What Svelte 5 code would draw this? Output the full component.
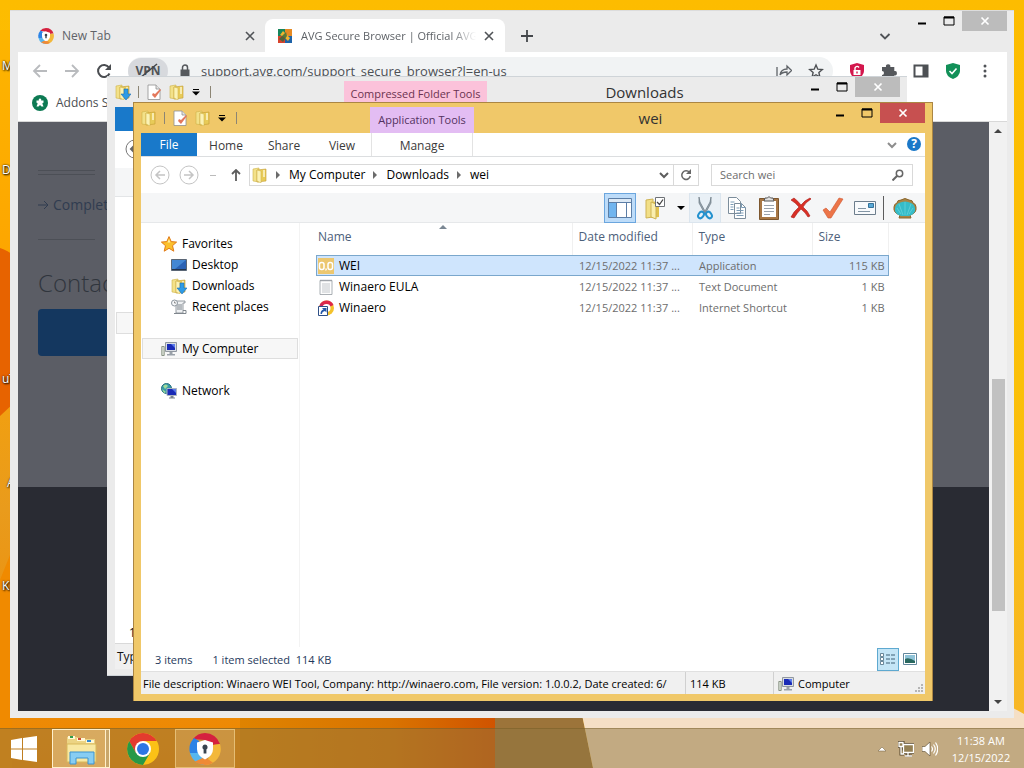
<script lang="ts">
	type Tone = 'grey' | 'red';

	const desktopLabels = [
		{ text: 'My Computer', top: 58 },
		{ text: 'Downloads', top: 162 },
		{ text: 'uTorrent', top: 371 },
		{ text: 'Avast', top: 475, inset: true },
		{ text: 'KMPlayer', top: 578 }
	];

	const favorites = [
		{ name: 'Desktop', icon: 'desktop' },
		{ name: 'Downloads', icon: 'download' },
		{ name: 'Recent places', icon: 'recent' }
	];

	const files = [
		{ name: 'WEI', icon: 'wei', type: 'Application', size: '115 KB' },
		{ name: 'Winaero EULA', icon: 'text', type: 'Text Document', size: '1 KB' },
		{ name: 'Winaero', icon: 'link', type: 'Internet Shortcut', size: '1 KB' }
	];

	const crumbs = ['My Computer', 'Downloads', 'wei'];

	let selected = $state('WEI');
	let search = $state('');
	let address = $state('support.avg.com/support_secure_browser?l=en-us');
</script>

{#snippet folderShapes()}
	<path d="M1 2l6-1v14l-6-1z" fill="#f3e189" stroke="#cfb148" stroke-width=".6" />
	<path d="M5 3l9-1v12l-9 1z" fill="#e8cb58" stroke="#c39c33" stroke-width=".6" />
	<path d="M5 3l4 1v12l-4-2z" fill="#fbf2b5" stroke="#d3b74f" stroke-width=".6" />
	<path d="M11 3h2v7h-2z" fill="#fff8d6" opacity=".7" />
{/snippet}

{#snippet icon(name: string)}
	<svg class="icon" viewBox="0 0 16 16" aria-hidden="true">
		{#if name === 'folder'}
			{@render folderShapes()}
		{:else if name === 'download'}
			{@render folderShapes()}
			<path d="M9 5h4v5h3l-5 6-5-6h3z" fill="#2e9be6" stroke="#1c6fb4" stroke-width=".6" />
		{:else if name === 'page'}
			<path d="M2 1h8l4 4v10.500H2z" fill="#fff" stroke="#8f8f8f" stroke-width=".8" />
			<path d="M10 1v4h4" fill="#e4e4e4" stroke="#8f8f8f" stroke-width=".8" />
			<path d="M6 11l3 3 6-8-1-1-5 5-2-1z" fill="#e3785c" />
		{:else if name === 'star'}
			<path d="M8 .6l2.200 5 5.400.5-4.100 3.600 1.300 5.500L8 12.300l-4.800 2.900 1.300-5.500L.4 6.100l5.400-.5z" fill="#fbc02d" stroke="#e07a18" />
			<path d="M8 3l1.300 3.500H6.500z" fill="#fff0a8" />
		{:else if name === 'desktop'}
			<path d="M.5 2.500h15v11H.5z" fill="#2a62b5" stroke="#5a6675" />
			<path d="M1 3h14L4 12H1z" fill="#4f97e0" opacity=".7" />
			<path d="M1 12h14v1H1z" fill="#22344c" />
		{:else if name === 'recent'}
			<path d="M4 2h10v2h-2v10H5V6H3z" fill="#eef0f2" stroke="#7f868d" stroke-width=".8" />
			<path d="M6 6h5M6 8h5M6 10h5M3 14.500h12v-3h-3" fill="none" stroke="#7f868d" />
			<circle cx="3.500" cy="4" r="3" fill="#f6f7f9" stroke="#8c959d" />
			<path d="M3.500 2.500V4h1.500" stroke="#666" fill="none" stroke-width=".7" />
		{:else if name === 'computer'}
			<path d="M.8 5.500h2.400v9H.8z" fill="#dfe5da" stroke="#74806f" stroke-width=".8" />
			<path d="M4.500 1.500h11v9h-11z" fill="#d9dde2" stroke="#9097a0" />
			<path d="M6 3h8v6H6z" fill="#1a2bb6" />
			<path d="M10 3h4v4z" fill="#5b7bea" />
			<path d="M8.500 11h3v2h2.500v1.500H6V13h2.500z" fill="#9aa1a9" />
		{:else if name === 'network'}
			<circle cx="5.500" cy="5.500" r="5" fill="#3a9aa8" stroke="#27707f" />
			<path d="M2 3q3-3 5 0L4 6zM1 6l4 3-2 1z" fill="#9fdc9b" />
			<path d="M6 5.500h9.500v7H6z" fill="#1a2bb6" stroke="#aeb6c0" />
			<path d="M11 6h4v4z" fill="#5b7bea" />
			<path d="M9.500 13h3v1.500H14v1H8v-1h1.500z" fill="#7c858e" />
		{:else if name === 'wei'}
			<path d="M0 0h16v16H0z" fill="#ecc76f" />
			<rect x="1.500" y="4.500" width="4.500" height="7" rx="2" fill="none" stroke="#fff" stroke-width="1.500" />
			<rect x="10" y="4.500" width="4.500" height="7" rx="2" fill="none" stroke="#fff" stroke-width="1.500" />
			<path d="M7.300 10.500h1.500v1.500L7.500 13z" fill="#fff" />
		{:else if name === 'text'}
			<path d="M2 1.500h12v14H2z" fill="#fdfdfd" stroke="#969ca2" stroke-width=".8" />
			<path d="M4 5h8M4 7h8M4 9h8M4 11h8M4 13h8" stroke="#aab0b6" stroke-width=".7" />
			<path d="M3 .5v2M5 .5v2M7 .5v2M9 .5v2M11 .5v2M13 .5v2" stroke="#8a9095" stroke-width=".7" />
		{:else if name === 'link'}
			<circle cx="8.500" cy="8" r="7.500" fill="#f4c22b" />
			<path d="M2 4.500A7.500 7.500 0 0 1 15.500 5L9 8z" fill="#dd2748" />
			<path d="M1 8a7.500 7.500 0 0 1 2-5l5 5z" fill="#c5285f" />
			<circle cx="8.500" cy="8" r="4" fill="#fff" />
			<path d="M.5 6.500h9v9h-9z" fill="#fff" stroke="#2f4f86" />
			<path d="M2.500 14q0-4 3-4.500L4 8h4.500v4.500L7 11q-3 .5-3 3z" fill="#2457a8" />
		{:else if name === 'secure'}
			<path d="M8 0a8 8 0 0 1 7.500 5.500L11 6 8 3.500 2 3A8 8 0 0 1 8 0z" fill="#d5213f" />
			<path d="M15.500 5.500A8 8 0 0 1 8 16l2-4 2-6z" fill="#f3b83a" />
			<path d="M8 16A8 8 0 0 1 .5 10L4 6l3 7z" fill="#56b6ee" />
			<path d="M8 16a8 8 0 0 1-5-1.800L8 12l4 2.900A8 8 0 0 1 8 16z" fill="#ef8a35" />
			<path d="M.5 10A8 8 0 0 1 2.500 2.500L5 4v6z" fill="#2c83e6" />
			<path d="M8 3.500l4 1.300v3.200q0 3.500-4 5.200-4-1.700-4-5.200V4.800z" fill="#fff" />
			<path d="M8 5.800a1.300 1.300 0 0 1 .7 2.400v2H7.300v-2A1.300 1.300 0 0 1 8 5.800z" fill="#38434f" />
		{:else if name === 'avg'}
			<path d="M1 1h7v7H1z" fill="#17855c" />
			<path d="M8 1h7v7H8z" fill="#e58a24" />
			<path d="M1 8h7v7H1z" fill="#d8432c" />
			<path d="M8 8h7v7H8z" fill="#1e63a8" />
			<path d="M6 3l4 4 3 3-2 3-4-4-4-2z" fill="#f1b52e" />
			<path d="M2 11l7-7 1 4-4 6z" fill="#356a3c" opacity=".8" />
		{/if}
	</svg>
{/snippet}

{#snippet titleBar(first: string, context: string, title: string, tone: Tone)}
	<header class="titlebar {tone}">
		<div class="quick">
			{@render icon(first)}
			<i class="sep"></i>
			{@render icon('page')}
			{@render icon('folder')}
			<svg class="caret" viewBox="0 0 8 8"><path d="M1 1.500h6" stroke="#000" /><path d="M0 3.500h8L4 7.500z" /></svg>
			<i class="sep"></i>
		</div>
		<span class="context">{context}</span>
		<h2>{title}</h2>
		{@render caption(tone)}
	</header>
{/snippet}

{#snippet caption(tone: Tone)}
	<div class="caption">
		<button class="min" aria-label="Minimize"><svg viewBox="0 0 12 12"><path d="M2 8.500h8" stroke="#000" stroke-width="2" /></svg></button>
		<button class="max" aria-label="Maximize"><svg viewBox="0 0 12 12"><path d="M1 2v8h10V2z" fill="none" stroke="#000" /><path d="M1 2.500h10" stroke="#000" stroke-width="2" /></svg></button>
		<button class="close {tone}" aria-label="Close"><svg viewBox="0 0 12 12"><path d="M2.500 2.500l7 7m0-7l-7 7" stroke="#fff" stroke-width="1.700" /></svg></button>
	</div>
{/snippet}

{#snippet cross()}
	<svg class="cross" viewBox="0 0 10 10"><path d="M1 1l8 8m0-8L1 9" stroke="#505357" stroke-width="1.600" /></svg>
{/snippet}

<div class="desktop">
	<svg class="wallpaper" viewBox="0 0 1024 768" preserveAspectRatio="none" aria-hidden="true">
		<defs>
			<linearGradient id="sky" x2="0" y2="1">
				<stop offset="0" stop-color="#fdbc00" />
				<stop offset=".5" stop-color="#fbc008" />
				<stop offset="1" stop-color="#f7b52c" />
			</linearGradient>
			<linearGradient id="left" x2="0" y2="1">
				<stop offset="0" stop-color="#fdb500" />
				<stop offset=".3" stop-color="#fda600" />
				<stop offset=".65" stop-color="#e99b1c" />
				<stop offset="1" stop-color="#ef8600" />
			</linearGradient>
			<linearGradient id="band">
				<stop offset="0" stop-color="#df8300" />
				<stop offset=".55" stop-color="#d97400" />
				<stop offset="1" stop-color="#cf4f00" />
			</linearGradient>
		</defs>
		<path d="M0 0h1024v768H0z" fill="url(#sky)" />
		<path d="M0 30h300v738H0z" fill="url(#left)" />
		<path d="M0 248q12 4 30 20v120L0 416z" fill="#e76300" />
		<path d="M0 580l12-30v218H0z" fill="#f08a00" />
		<path d="M240 718l50-30h220v80H240z" fill="url(#band)" />
		<path d="M495 700h84l14 68h-98z" fill="#9c743a" />
		<path d="M579 700h420l25 14v54H593z" fill="#f5dfc5" />
	</svg>

	<main>
		{#each desktopLabels as label (label.text)}
			<span class="shortcut" class:inset={label.inset} style:top="{label.top}px">{label.text}</span>
		{/each}

		<section class="window browser" aria-label="Browser">
			<header class="strip">
				<div class="tab">
					{@render icon('secure')}
					<span class="tab-title">New Tab</span>
					<button aria-label="Close tab">{@render cross()}</button>
				</div>
				<div class="tab active">
					{@render icon('avg')}
					<span class="tab-title">AVG Secure Browser | Official AVG</span>
					<button aria-label="Close tab">{@render cross()}</button>
				</div>
				<button class="new-tab" aria-label="New tab"><svg viewBox="0 0 12 12"><path d="M6 0v12M0 6h12" stroke="#44474b" stroke-width="1.800" /></svg></button>
				<button class="tab-menu" aria-label="Search tabs"><svg viewBox="0 0 12 12"><path d="M1.500 4L6 8.500 10.500 4" fill="none" stroke="#505357" stroke-width="1.800" /></svg></button>
				{@render caption('grey')}
			</header>

			<div class="toolbar">
				<button aria-label="Back"><svg viewBox="0 0 16 16"><path d="M15 8H2m6-6L2 8l6 6" fill="none" stroke="#b9bbbe" stroke-width="1.800" /></svg></button>
				<button aria-label="Forward"><svg viewBox="0 0 16 16"><path d="M1 8h13M8 2l6 6-6 6" fill="none" stroke="#b9bbbe" stroke-width="1.800" /></svg></button>
				<button aria-label="Reload"><svg viewBox="0 0 16 16"><path d="M13.500 10.500A6 6 0 1 1 13 4.500" fill="none" stroke="#4a4d51" stroke-width="2" /><path d="M15 1v6H9z" fill="#4a4d51" /></svg></button>
				<div class="omnibox">
					<button class="vpn">VPN<svg viewBox="0 0 24 16"><path d="M4 15L21 1" stroke="#44474b" stroke-width="1.500" /></svg></button>
					<svg class="lock" viewBox="0 0 12 14"><path d="M1.500 5.500h9V13h-9z" fill="#55585c" /><path d="M3.500 6V3.500a2.500 2.500 0 0 1 5 0V6" fill="none" stroke="#55585c" stroke-width="1.500" /></svg>
					<input type="text" aria-label="Address" bind:value={address} />
					<button aria-label="Share page"><svg viewBox="0 0 16 16"><path d="M1 4v11M4 12q1-6 7-6V3l4.500 4.500L11 12V9q-5 0-7 3z" fill="none" stroke="#5f6368" stroke-width="1.300" /></svg></button>
					<button aria-label="Bookmark"><svg viewBox="0 0 16 16"><path d="M8 2l1.800 4.200 4.500.4-3.400 3 1 4.400L8 11.700 4.100 14l1-4.400-3.400-3 4.500-.4z" fill="none" stroke="#4d5054" stroke-width="1.400" /></svg></button>
				</div>
				<div class="extensions">
					<button aria-label="Privacy"><svg viewBox="0 0 16 16"><path d="M8 0l7 2v6q0 5-7 8-7-3-7-8V2z" fill="#d3174d" /><path d="M4.500 7h7v5h-7z" fill="#fff" /><path d="M6 7V5q2-3 4-.5" fill="none" stroke="#fff" stroke-width="1.400" /><path d="M7.300 8.500h1.400v2H7.300z" fill="#d3174d" /></svg></button>
					<button aria-label="Extensions"><svg viewBox="0 0 16 16"><path d="M1 4h4a2.200 2.200 0 1 1 4.300 0h4v4a2.200 2.200 0 1 1 0 4.300V16H9a2 2 0 1 0-4 0H1v-4a2 2 0 1 0 0-4z" fill="#55585c" /></svg></button>
					<button aria-label="Side panel"><svg viewBox="0 0 16 16"><path d="M1.500 2.500h13v11h-13z" fill="none" stroke="#4d5054" stroke-width="2" /><path d="M9.500 2h5v12h-5z" fill="#4d5054" /></svg></button>
					<button aria-label="Security"><svg viewBox="0 0 16 16"><path d="M8 0l7 2v6q0 5-7 8-7-3-7-8V2z" fill="#129058" /><path d="M4.500 8L7 10.500l4.500-5" fill="none" stroke="#fff" stroke-width="1.600" /></svg></button>
					<button aria-label="More"><svg viewBox="0 0 16 16"><g fill="#505357"><circle cx="8" cy="3" r="1.500" /><circle cx="8" cy="8" r="1.500" /><circle cx="8" cy="13" r="1.500" /></g></svg></button>
				</div>
			</div>

			<nav class="bookmarks">
				<svg class="icon" viewBox="0 0 16 16"><circle cx="8" cy="8" r="8" fill="#0d7a53" /><path d="M4.500 5.500h2.300q-.5-2 1.200-2t1.200 2h2.300v2.300q-1.500 0-1 1.200l1 2.500H9.500l-1.500-1.500-1.500 1.500H4.500l1-2.500q.5-1.200-1-1.200z" fill="#fff" /></svg>
				<a href="#addons">Addons Store</a>
			</nav>

			<div class="viewport">
				<article class="site">
					<div class="content">
						<hr class="double" />
						<a href="#complete"><svg viewBox="0 0 12 12"><path d="M0 6h10M6 2l4 4-4 4" fill="none" stroke="#303c50" /></svg>Complete</a>
						<hr />
						<h1>Contact</h1>
						<button aria-label="Contact support"></button>
					</div>
					<footer></footer>
				</article>
				<div class="scrollbar">
					<svg viewBox="0 0 8 8"><path d="M0 6l4-4 4 4z" fill="#444" /></svg>
					<i></i>
					<svg viewBox="0 0 8 8"><path d="M0 2l4 4 4-4z" fill="#444" /></svg>
				</div>
			</div>
		</section>

		<section class="window downloads" aria-label="Downloads">
			{@render titleBar('download', 'Compressed Folder Tools', 'Downloads', 'grey')}
			<div class="pane">
				<div class="blue"></div>
				<div class="nav-row"><svg viewBox="0 0 20 20"><circle cx="10" cy="10" r="9" fill="none" stroke="#777" /><path d="M15 10H6m4-4l-4 4 4 4" fill="none" stroke="#666" stroke-width="2" /></svg></div>
				<div class="grey-band"></div>
				<div class="tree"><i></i></div>
				<div class="count">1</div>
				<div class="status">Type</div>
			</div>
		</section>

		<section class="window wei" aria-label="wei">
			{@render titleBar('folder', 'Application Tools', 'wei', 'red')}
			<div class="pane">
				<nav class="ribbon">
					<button class="file">File</button>
					<button>Home</button>
					<button>Share</button>
					<button>View</button>
					<button class="manage">Manage</button>
					<svg class="expand" viewBox="0 0 12 12"><path d="M2 4l4 4 4-4" fill="none" stroke="#8d8d8d" stroke-width="2" /></svg>
					<button class="help" aria-label="Help">?</button>
				</nav>

				<div class="address-row">
					<button aria-label="Back"><svg viewBox="0 0 20 20"><circle cx="10" cy="10" r="9" fill="none" stroke="#c4c4c4" /><path d="M15 10H6m4-4l-4 4 4 4" fill="none" stroke="#c4c4c4" stroke-width="1.500" /></svg></button>
					<button aria-label="Forward"><svg viewBox="0 0 20 20"><circle cx="10" cy="10" r="9" fill="none" stroke="#c4c4c4" /><path d="M5 10h9m-4-4l4 4-4 4" fill="none" stroke="#c4c4c4" stroke-width="1.500" /></svg></button>
					<i class="dash"></i>
					<button class="up" aria-label="Up"><svg viewBox="0 0 12 12"><path d="M6 12V1M2 5l4-4 4 4" fill="none" stroke="#5d5d5d" stroke-width="1.800" /></svg></button>
					<div class="path">
						{@render icon('folder')}
						{#each crumbs as crumb (crumb)}
							<svg class="arrow" viewBox="0 0 6 8"><path d="M1 0l4 4-4 4z" fill="#6b6b6b" /></svg>
							<a href="#{crumb}">{crumb}</a>
						{/each}
						<svg class="drop" viewBox="0 0 12 12"><path d="M2 4l4 4 4-4" fill="none" stroke="#5d5d5d" stroke-width="2" /></svg>
						<button aria-label="Refresh"><svg viewBox="0 0 12 12"><path d="M9.500 3.500A4.300 4.300 0 1 0 10.300 7" fill="none" stroke="#666" stroke-width="1.500" /><path d="M11 0v5H6z" fill="#666" /></svg></button>
					</div>
					<label class="search">
						<input type="text" placeholder="Search wei" aria-label="Search wei" bind:value={search} />
						<svg viewBox="0 0 12 12"><circle cx="7.500" cy="4.500" r="3.200" fill="none" stroke="#666" stroke-width="1.500" /><path d="M5 7l-4.500 4.500" stroke="#666" stroke-width="2" /></svg>
					</label>
				</div>

				<div class="commands">
					<button class="on" aria-label="Navigation pane"><svg viewBox="0 0 24 24"><path d="M.5 2.500h23v19H.5z" fill="#fff" stroke="#5c7ea6" /><path d="M1 3h22v3H1z" fill="#dce9f5" /><path d="M1 6h7v15H1z" fill="#70b5ef" /><path d="M8.500 6v15M1 6.500h22M18.500 7v14" stroke="#5c7ea6" /></svg></button>
					<button class="options" aria-label="Folder options"><svg viewBox="0 0 24 24"><path d="M3 4l7-1v18l-7 1z" fill="#f2df87" stroke="#ceb354" /><path d="M8 6l8-1v16l-8 1z" fill="#e0c14e" /><path d="M8 6l5 2v15l-5-2z" fill="#faeeae" stroke="#ceb354" /><path d="M12.500 1.500h9v9h-9z" fill="#fff" stroke="#6e7277" /><path d="M14 6l2.500 2.500L20 3.500" fill="none" stroke="#444" stroke-width="1.300" /></svg></button>
					<svg class="more" viewBox="0 0 8 8"><path d="M0 2h8L4 6z" /></svg>
					<button class="hot" aria-label="Cut"><svg viewBox="0 0 24 24"><path d="M6 1l1 5 6 11-1 1L6 7zM18 1l-1 5-6 11 1 1 6-11z" fill="#9ba7b1" stroke="#6b7882" stroke-width=".7" /><ellipse cx="8" cy="19" rx="2.500" ry="3.500" transform="rotate(35 8 19)" fill="none" stroke="#2492cf" stroke-width="2" /><ellipse cx="16" cy="19" rx="2.500" ry="3.500" transform="rotate(-35 16 19)" fill="none" stroke="#2492cf" stroke-width="2" /></svg></button>
					<button aria-label="Copy"><svg viewBox="0 0 24 24"><path d="M3.500 1.500h8l4 4v12h-12zM9.500 7.500h7l4 4v11h-11z" fill="#fff" stroke="#7c8d9b" /><path d="M16.500 7.500v4h4M5.500 6h4M5.500 8.500h3M5.500 11h3M5.500 13.500h3M11.500 12h3M11.500 14.500h7M11.500 17h7M11.500 19.500h7" fill="none" stroke="#7c9cb6" /></svg></button>
					<button aria-label="Paste"><svg viewBox="0 0 24 24"><path d="M2.500 2.500h19v21h-19z" fill="#a87745" stroke="#7d572f" /><path d="M5 5h14v16H5z" fill="#fff" /><path d="M7 9.500h10M7 12.500h10M7 15.500h10M7 18.500h6" stroke="#9aa3ad" /><path d="M7 5l1-3h2.500q1.500-3 3 0H16l1 3z" fill="#e0e0e0" stroke="#555" /></svg></button>
					<button aria-label="Delete"><svg viewBox="0 0 24 24"><path d="M2 4l3-2q4 3 7 7 4-5 9-7l1 1q-5 3-8 8 5 4 7 9l-2 1q-3-5-7-8-4 4-7 9l-3-1q3-6 8-10-3-4-8-7z" fill="#d92f25" stroke="#a81d18" stroke-width=".6" /></svg></button>
					<button aria-label="Rename"><svg viewBox="0 0 24 24"><path d="M2 14l3-2 4 4 9-14 4 1L10 22H7z" fill="#ec7548" stroke="#cf5630" stroke-width=".6" /></svg></button>
					<button aria-label="Properties"><svg viewBox="0 0 24 24"><path d="M1.500 5.500h21v13h-21z" fill="#f8fafc" stroke="#6c7d8c" /><path d="M15.500 7.500h5v4h-5z" fill="#58a8d6" stroke="#35739a" /><path d="M5 12.500h8M5 15.500h12" stroke="#8396a5" /></svg></button>
					<i class="divider"></i>
					<button aria-label="Classic Shell"><svg viewBox="0 0 24 24"><path d="M7 19Q0 17 1 11q0-3 3-4 0-3 4-3 4-3 8 0 4 0 4 3 3 1 3 4 1 6-6 8l1 3H6z" fill="#a88545" stroke="#8c672e" /><path d="M8 20Q1 18 2 12q1-4 4-5 6-3 12 0 3 1 4 5 1 6-6 8z" fill="#35bcc8" /><path d="M12 19V6M10 19L6 8M14 19l4-11M8 18l-4-6M16 18l4-6" stroke="#6bd6dc" stroke-width=".7" /></svg></button>
				</div>

				<div class="body">
					<nav class="tree">
						<a href="#favorites">{@render icon('star')}Favorites</a>
						{#each favorites as item (item.name)}
							<a class="sub" href="#{item.icon}">{@render icon(item.icon)}{item.name}</a>
						{/each}
						<a class="place current" href="#computer">{@render icon('computer')}My Computer</a>
						<a class="place" href="#network">{@render icon('network')}Network</a>
					</nav>
					<div class="list">
						<table>
							<thead>
								<tr>
									<th class="name">Name<svg viewBox="0 0 8 4"><path d="M0 4l4-4 4 4z" fill="#7b8793" /></svg></th>
									<th class="date">Date modified</th>
									<th class="type">Type</th>
									<th class="size">Size</th>
								</tr>
							</thead>
							<tbody>
								{#each files as file (file.name)}
									<tr class:selected={selected === file.name} onclick={() => (selected = file.name)}>
										<td><span class="file-name">{@render icon(file.icon)}{file.name}</span></td>
										<td>12/15/2022 11:37 ...</td>
										<td>{file.type}</td>
										<td class="num">{file.size}</td>
									</tr>
								{/each}
							</tbody>
						</table>
					</div>
				</div>

				<div class="summary">
					<span>3 items</span>
					<span>1 item selected&nbsp; 114 KB</span>
					<button class="view on" aria-label="Details view"><svg viewBox="0 0 18 16"><path d="M1.500 2.500h3v3h-3zM1.500 6.500h3v3h-3zM1.500 10.500h3v3h-3z" fill="#fff" stroke="#4c6c82" stroke-width=".8" /><path d="M7 4h4m1 0h4M7 8h4m1 0h4M7 12h4m1 0h4" stroke="#3f6077" /></svg></button>
					<button class="view" aria-label="Large icons view"><svg viewBox="0 0 18 16"><path d="M2.500 2.500h13v11h-13z" fill="#fff" stroke="#62879c" /><path d="M4 4h10v8H4z" fill="#8fc3d8" /><path d="M4 8q4-2 10 2v2H4z" fill="#29685f" /></svg></button>
				</div>

				<footer class="status">
					<span>File description: Winaero WEI Tool, Company: http://winaero.com, File version: 1.0.0.2, Date created: 6/</span>
					<span>114 KB</span>
					<span>{@render icon('computer')}Computer</span>
					<svg class="grip" viewBox="0 0 10 10"><path d="M7 1h2v2H7zM7 4h2v2H7zM4 4h2v2H4zM7 7h2v2H7zM4 7h2v2H4zM1 7h2v2H1z" fill="#b5b5b5" /></svg>
				</footer>
			</div>
		</section>
	</main>

	<footer class="taskbar">
		<button class="start" aria-label="Start"><svg viewBox="0 0 28 28"><path d="M1 5l11-2v10.500H1zM13 3l14-2v12.500H13zM1 14.500h11V25L1 23zM13 14.500h14V27l-14-2z" fill="#fff" /></svg></button>
		<button class="task explorer" aria-label="File Explorer">
			<svg viewBox="0 0 32 32"><path d="M2 4h10l2 2h16v23H2z" fill="#ecd483" /><path d="M3 3h7v3H3zM12 5h8v3h-8zM21 7h8v3h-8z" fill="#fff8d5" /><path d="M5 3h3v2H5z" fill="#2f9d4b" /><path d="M13 5h3v2h-3z" fill="#cf4934" /><path d="M22 7h4v2h-4z" fill="#3589cc" /><path d="M2 11h29v18H2z" fill="#f8e8a2" stroke="#d8b95a" /><path d="M5 19h24v12h-6v-6H11v6H5z" fill="#87cdf3" stroke="#3c93cf" /></svg>
		</button>
		<button class="task" aria-label="Chrome">
			<svg viewBox="0 0 32 32"><circle cx="16" cy="16" r="16" fill="#fbc116" /><path d="M2.200 8A16 16 0 0 1 29.800 8H16L9 20z" fill="#e33b2e" /><path d="M2.200 8A16 16 0 0 0 16 32l7-12-14 0z" fill="#289847" /><circle cx="16" cy="16" r="8" fill="#fff" /><circle cx="16" cy="16" r="6" fill="#2d76e4" /></svg>
		</button>
		<button class="task running" aria-label="AVG Secure Browser">{@render icon('secure')}</button>
		<div class="tray">
			<svg viewBox="0 0 16 16"><path d="M4 10l4-4 4 4z" fill="#fff" stroke="#6d5b38" stroke-width=".5" /></svg>
			<svg viewBox="0 0 16 16"><path d="M5.500 3.500h10v8h-10zM10 12v3M7 15h7M1 1.500h4v4H1zM3 6v7h3" fill="none" stroke="#54452a" stroke-width="3" /><path d="M5.500 3.500h10v8h-10zM10 12v3M7 15h7M1 1.500h4v4H1zM3 6v7h3" fill="#948054" stroke="#fff" stroke-width="1.300" /></svg>
			<svg viewBox="0 0 16 16"><path d="M0 5.500h3L8 1v14l-5-4.500H0z" fill="#fff" stroke="#54452a" stroke-width=".6" /><path d="M9.500 5.500q2 2.500 0 5M11.500 3.500q3.500 4.500 0 9M13.500 1.500q4.500 6.500 0 13" fill="none" stroke="#fff" stroke-width="1.200" /></svg>
			<time>11:38 AM<br />12/15/2022</time>
		</div>
	</footer>
</div>

<style>
	:global(body) {
		margin: 0;
	}
	.desktop {
		position: relative;
		display: flex;
		flex-direction: column;
		height: 100vh;
		overflow: hidden;
		font-family: 'Open Sans', 'Noto Sans', sans-serif;
		font-size: 12px;
		line-height: 16px;
		color: #111;
	}
	.desktop * {
		box-sizing: border-box;
	}
	.wallpaper {
		position: absolute;
		inset: 0;
		width: 100%;
		height: 100%;
	}
	main {
		position: relative;
		flex: 1;
	}
	button,
	input {
		font: inherit;
		color: inherit;
		border: 0;
		padding: 0;
		margin: 0;
		background: none;
	}
	button {
		display: flex;
		align-items: center;
		justify-content: center;
	}
	a {
		color: inherit;
		text-decoration: none;
	}
	svg {
		display: block;
		flex: none;
	}
	.icon {
		width: 16px;
		height: 16px;
	}
	.shortcut {
		position: absolute;
		left: 2px;
		color: #fff;
		text-shadow: 1px 1px 2px #000, 0 0 2px #000;
		white-space: nowrap;
	}
	.shortcut.inset {
		left: 7px;
	}
	.window {
		position: absolute;
		display: flex;
		flex-direction: column;
		overflow: hidden;
	}
	.window.browser {
		inset: 10px 10px 10px 10px;
		padding: 0 7px 7px 8px;
		background: #ebebeb;
		border-top: 1px solid #dcdcdc;
	}
	.window.downloads {
		inset: 76px 117px 52px 107px;
		padding: 0 7px 6px 8px;
		background: #ebebeb;
		border: solid #cfd4d8;
		border-width: 1px 0;
	}
	.window.wei {
		inset: 102px 91px 27px 133px;
		padding: 0 7px 7px;
		background: #f0c869;
		border: 1px solid #ab8643;
		border-bottom-width: 0;
	}

	/* caption buttons */
	.caption {
		display: flex;
		align-self: flex-start;
	}
	.caption button {
		height: 20px;
	}
	.caption svg {
		width: 12px;
		height: 12px;
	}
	.min {
		width: 26px;
	}
	.max {
		width: 27px;
	}
	.caption .close {
		width: 45px;
		background: #bcbcbc;
	}
	.caption .close.red {
		background: #c75050;
	}

	.titlebar {
		display: grid;
		grid-template-columns: 229px auto 1fr 98px;
		flex: none;
		height: 30px;
		align-items: center;
	}
	.quick {
		display: flex;
		align-items: center;
		gap: 7px;
	}
	.sep {
		width: 1px;
		height: 12px;
		background: #8c8574;
	}
	.quick .caret {
		width: 8px;
		height: 8px;
		margin-right: 3px;
	}
	.context {
		align-self: end;
		width: 104px;
		height: 26px;
		font-size: 11px;
		line-height: 26px;
		text-align: center;
		white-space: nowrap;
		color: #53325f;
		background: #e3bdf3;
	}
	.grey .context {
		width: 143px;
		color: #6b3350;
		background: #fbc2da;
	}
	.titlebar h2 {
		margin: 0;
		font-size: 15px;
		font-weight: 400;
		text-align: center;
		color: #333;
	}

	/* browser */
	.strip {
		display: flex;
		flex: none;
		height: 41px;
		align-items: flex-end;
	}
	.tab {
		display: flex;
		flex: 0 1 240px;
		min-width: 0;
		height: 33px;
		align-items: center;
		padding: 0 11px 0 12px;
		color: #5f6368;
	}
	.tab:first-child {
		flex-basis: 247px;
		padding: 0 10px 0 20px;
	}
	.tab.active {
		background: #fff;
		border-radius: 8px 8px 0 0;
	}
	.tab-title {
		flex: 1;
		margin: 0 8px;
		overflow: hidden;
		white-space: nowrap;
	}
	.active .tab-title {
		font-size: 11px;
		mask-image: linear-gradient(90deg, #000 85%, transparent);
	}
	.cross {
		width: 10px;
		height: 10px;
	}
	.new-tab {
		width: 44px;
		height: 33px;
	}
	.new-tab svg,
	.tab-menu svg {
		width: 12px;
		height: 12px;
	}
	.tab-menu {
		margin-left: auto;
		width: 48px;
		height: 33px;
	}
	.toolbar {
		display: flex;
		flex: none;
		height: 38px;
		align-items: center;
		gap: 16px;
		padding: 0 14px;
		background: #fff;
	}
	.toolbar svg {
		width: 16px;
		height: 16px;
	}
	.omnibox {
		display: flex;
		flex: 1;
		height: 28px;
		align-items: center;
		gap: 16px;
		padding-right: 9px;
		background: #f1f3f4;
		border-radius: 14px;
	}
	.omnibox .vpn {
		position: relative;
		width: 40px;
		height: 26px;
		margin-right: -5px;
		font-weight: 700;
		color: #505357;
		background: #d7d9dd;
		border-radius: 13px;
	}
	.omnibox .vpn svg {
		position: absolute;
		width: 24px;
	}
	.omnibox .lock {
		width: 12px;
		height: 14px;
		margin-right: -6px;
	}
	.omnibox input {
		flex: 1;
		min-width: 0;
		font-size: 13px;
		color: #4d5054;
	}
	.extensions {
		display: flex;
		gap: 16px;
	}
	.bookmarks {
		display: flex;
		flex: none;
		height: 32px;
		align-items: center;
		gap: 8px;
		padding: 0 14px 6px;
		color: #4b4e52;
		background: #fff;
		border-bottom: 1px solid #d8d8d8;
	}
	.viewport {
		display: flex;
		flex: 1;
		min-height: 0;
	}
	.site {
		display: flex;
		flex: 1;
		flex-direction: column;
		background: #5b5d65;
	}
	.content {
		height: 62%;
		padding: 48px 20px 0;
		color: #30353d;
	}
	.content hr {
		width: 57px;
		margin: 0;
		border: 0;
		border-top: 1px solid #4c4f56;
	}
	.content .double {
		height: 5px;
		border-bottom: 1px solid #4c4f56;
	}
	.content a {
		display: flex;
		align-items: center;
		gap: 3px;
		padding: 22px 0 26px;
		font-size: 14px;
		color: #303c50;
	}
	.content a svg {
		width: 12px;
		height: 12px;
	}
	.content h1 {
		margin: 26px 0 10px;
		font-size: 24px;
		line-height: 33px;
		font-weight: 300;
	}
	.content button {
		width: 240px;
		height: 47px;
		background: #14375f;
		border-radius: 4px;
	}
	.site footer {
		flex: 1;
		background: #292b33;
	}
	.scrollbar {
		display: flex;
		width: 18px;
		flex-direction: column;
		align-items: center;
		padding: 5px 0;
		background: #f1f1f1;
	}
	.scrollbar svg {
		width: 8px;
		height: 8px;
	}
	.scrollbar i {
		width: 13px;
		height: 40%;
		margin: auto 0 87px;
		background: #c1c1c1;
	}

	/* explorer windows */
	.pane {
		display: flex;
		flex: 1;
		flex-direction: column;
		min-height: 0;
		background: #fff;
	}
	.blue {
		width: 56px;
		height: 24px;
		background: #1979ca;
	}
	.nav-row {
		height: 37px;
		padding: 8px 10px;
	}
	.nav-row svg {
		width: 20px;
		height: 20px;
	}
	.grey-band {
		height: 29px;
		background: #f5f6f7;
		border-bottom: 1px solid #e3e5e7;
	}
	.downloads .tree {
		flex: 1;
		width: 158px;
		padding: 115px 0 0 1px;
	}
	.downloads .tree i {
		display: block;
		height: 22px;
		background: #f7f7f7;
		border: 1px solid #dedede;
	}
	.count {
		height: 20px;
		padding: 2px 14px 0;
	}
	.downloads .status {
		height: 26px;
		padding: 5px 2px;
		background: #f0f0f0;
		border-top: 1px solid #d9d9d9;
	}
	.ribbon {
		display: flex;
		flex: none;
		height: 24px;
		align-items: stretch;
		border-bottom: 1px solid #dcdee0;
		color: #3b3b3b;
	}
	.ribbon button {
		width: 58px;
		padding-top: 2px;
	}
	.ribbon .file {
		width: 56px;
		padding-top: 0;
		color: #fff;
		background: #1979ca;
	}
	.ribbon .manage {
		width: 102px;
		border: solid #e3e3e3;
		border-width: 0 1px;
	}
	.expand {
		width: 12px;
		height: 12px;
		align-self: center;
		margin-left: auto;
	}
	.ribbon .help {
		width: 14px;
		height: 14px;
		margin: 4px 4px 0 9px;
		padding-top: 0;
		font-weight: 700;
		color: #fff;
		background: #1b78c8;
		border-radius: 50%;
	}
	.address-row {
		display: flex;
		flex: none;
		height: 36px;
		align-items: center;
		padding: 0 12px 0 9px;
	}
	.address-row svg {
		width: 12px;
		height: 12px;
	}
	.address-row > button svg {
		width: 20px;
		height: 20px;
	}
	.address-row > button + button {
		margin-left: 9px;
	}
	.dash {
		width: 6px;
		height: 1px;
		margin-left: 11px;
		background: #bbb;
	}
	.address-row .up {
		margin: 0 7px 0 14px;
	}
	.address-row .up svg {
		width: 12px;
		height: 12px;
	}
	.path {
		display: flex;
		flex: 1;
		height: 22px;
		align-items: center;
		padding-left: 2px;
		color: #000;
		border: 1px solid #d9d9d9;
	}
	.path .icon {
		width: 16px;
		height: 16px;
	}
	.path .arrow {
		width: 6px;
		height: 8px;
		margin: 0 8px 0 7px;
	}
	.path .drop {
		margin-left: auto;
		margin-right: 3px;
	}
	.path button {
		width: 25px;
		height: 100%;
		border-left: 1px solid #d9d9d9;
	}
	.search {
		display: flex;
		width: 202px;
		height: 22px;
		align-items: center;
		margin-left: 12px;
		padding: 0 8px;
		border: 1px solid #d9d9d9;
	}
	.search input {
		flex: 1;
		min-width: 0;
		font-size: 11px;
		outline: 0;
	}
	.search input::placeholder {
		color: #6d6d6d;
		opacity: 1;
	}
	.commands {
		display: flex;
		flex: none;
		height: 30px;
		align-items: center;
		justify-content: flex-end;
		padding-right: 4px;
		background: #f5f6f7;
		border-bottom: 1px solid #e6e8ea;
	}
	.commands button {
		width: 32px;
		height: 30px;
	}
	.commands button svg {
		width: 24px;
		height: 24px;
	}
	.commands .on {
		margin-right: 3px;
		background: #bddcf9;
		border: 1px solid #6ba6de;
	}
	.commands .hot {
		background: #e9f0f6;
		border: 1px solid #dbe5ee;
	}
	.commands .more {
		width: 8px;
		height: 8px;
		margin: 0 4px 0 6px;
	}
	.divider {
		width: 1px;
		height: 24px;
		margin: 0 5px 0 2px;
		background: #5c5c5c;
	}
	.body {
		display: flex;
		flex: 1;
		min-height: 0;
	}
	.wei .tree {
		display: flex;
		width: 159px;
		flex-direction: column;
		padding: 10px 1px 0;
		color: #000;
		border-right: 1px solid #f3f3f3;
	}
	.tree a {
		display: flex;
		height: 21px;
		align-items: center;
		gap: 5px;
		padding-left: 18px;
		border: 1px solid transparent;
	}
	.tree .sub {
		padding-left: 28px;
	}
	.tree .place {
		margin-top: 21px;
	}
	.tree .current {
		background: #f7f7f7;
		border-color: #dedede;
	}
	.list {
		flex: 1;
		padding-left: 16px;
		overflow: hidden;
	}
	table {
		table-layout: fixed;
		width: 573px;
		border-collapse: collapse;
		color: #6d6d6d;
	}
	th {
		position: relative;
		height: 32px;
		padding: 0 6px 5px;
		font-weight: 400;
		text-align: left;
		color: #4c607a;
		border-right: 1px solid #f0f0f0;
	}
	th.name {
		width: 256px;
		padding-left: 2px;
	}
	th svg {
		position: absolute;
		top: 2px;
		left: 48%;
		width: 8px;
		height: 4px;
	}
	.date,
	.type {
		width: 120px;
	}
	td {
		height: 21px;
		padding: 0 4px 0 7px;
		font-size: 11px;
		white-space: nowrap;
	}
	td:first-child {
		padding-left: 2px;
		font-size: 12px;
		color: #000;
	}
	.num {
		text-align: right;
	}
	.selected {
		background: #cfe5fd;
		outline: 1px solid #7aa7cc;
		outline-offset: -1px;
	}
	.file-name {
		display: flex;
		align-items: center;
		gap: 5px;
	}
	.summary {
		display: flex;
		flex: none;
		height: 24px;
		align-items: center;
		padding: 0 4px 0 14px;
		font-size: 11px;
		color: #1e395b;
	}
	.summary span {
		margin-right: 20px;
		padding-top: 2px;
	}
	.view {
		width: 22px;
		height: 23px;
	}
	.view svg {
		width: 18px;
		height: 16px;
	}
	.view.on {
		margin-left: auto;
		background: #c4e5f6;
		border: 1px solid #5ea9d0;
	}
	.wei .status {
		position: relative;
		display: grid;
		grid-template-columns: 1fr 88px 152px;
		flex: none;
		height: 23px;
		font-size: 11px;
		color: #000;
		background: #f0f0f0;
		border-top: 1px solid #e0e0e0;
	}
	.status span {
		display: flex;
		align-items: center;
		gap: 4px;
		padding: 2px 4px 0;
		overflow: hidden;
		white-space: nowrap;
		border-left: 1px solid #d0d0d0;
	}
	.status span:first-child {
		padding: 2px 0 0 2px;
		border: 0;
	}
	.grip {
		position: absolute;
		right: 1px;
		bottom: 1px;
		width: 10px;
		height: 10px;
	}

	/* taskbar */
	.taskbar {
		position: relative;
		display: flex;
		flex: none;
		height: 40px;
		background: rgba(144, 117, 64, 0.5);
		border-top: 1px solid rgba(110, 85, 30, 0.4);
	}
	.start {
		width: 48px;
		margin-right: 4px;
	}
	.start svg {
		width: 28px;
		height: 28px;
	}
	.task {
		width: 60px;
		border: 1px solid transparent;
	}
	.task svg {
		width: 32px;
		height: 32px;
	}
	.explorer {
		width: 58px;
		margin-right: 3px;
		background: rgba(255, 235, 190, 0.4);
		border-color: #fff0cc;
		box-shadow: inset -3px 0 0 #c9a76b, inset -4px 0 0 #fff0cc;
	}
	.running {
		margin-left: 2px;
		background: rgba(255, 235, 190, 0.2);
		border-color: rgba(255, 232, 170, 0.5);
	}
	.tray {
		display: flex;
		align-items: center;
		gap: 8px;
		margin-left: auto;
		padding-right: 12px;
	}
	.tray svg {
		width: 16px;
		height: 16px;
	}
	time {
		width: 62px;
		margin-left: 4px;
		font-size: 11px;
		line-height: 17px;
		text-align: center;
		color: #fff;
	}
</style>
